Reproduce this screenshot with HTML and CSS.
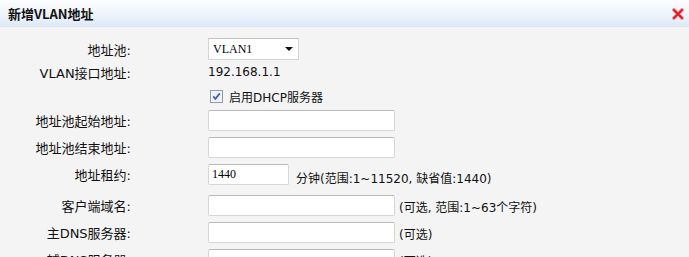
FILE: index.html
```html
<!DOCTYPE html>
<html lang="zh-CN">
<head>
<meta charset="utf-8">
<title>新增VLAN地址</title>
<link rel="stylesheet" href="styles.css">
</head>
<body>
<div class="dialog">
  <div class="titlebar">
    <span class="title">新增VLAN地址</span>
    <span class="close" title="关闭">
      <svg width="12" height="12" viewBox="0 0 12 12">
        <path d="M1.8 1.8 L10.2 10.2 M10.2 1.8 L1.8 10.2" stroke="#f2a7aa" stroke-width="3.8" stroke-linecap="round"/>
        <path d="M2 2 L10 10 M10 2 L2 10" stroke="#d9202b" stroke-width="2.2" stroke-linecap="round"/>
      </svg>
    </span>
  </div>
  <div class="form">
    <div class="row row-select">
      <span class="lbl">地址池:</span>
      <div class="select">
        <span class="select-val">VLAN1</span>
        <svg class="arrow" width="8" height="4" viewBox="0 0 8 4"><path d="M0 0 H8 L4 4 Z" fill="#111"/></svg>
      </div>
    </div>
    <div class="row row-text">
      <span class="lbl">VLAN接口地址:</span>
      <span class="val">192.168.1.1</span>
    </div>
    <div class="row row-text">
      <span class="lbl"></span>
      <span class="check">
        <svg width="13" height="13" viewBox="0 0 13 13">
          <rect x="0.5" y="0.5" width="12" height="12" fill="#fbfbfb" stroke="#8f9aa6"/>
          <rect x="1.5" y="1.5" width="10" height="10" fill="#eef1f5"/>
          <path d="M3.2 6.4 L5.4 8.8 L9.8 3.4" fill="none" stroke="#4864a8" stroke-width="1.8"/>
        </svg>
      </span>
      <span class="val">启用DHCP服务器</span>
    </div>
    <div class="row row-input">
      <span class="lbl">地址池起始地址:</span>
      <input class="inp" type="text" value="">
    </div>
    <div class="row row-input">
      <span class="lbl">地址池结束地址:</span>
      <input class="inp" type="text" value="">
    </div>
    <div class="row row-input row-lease">
      <span class="lbl">地址租约:</span>
      <input class="inp inp-short" type="text" value="1440">
      <span class="hint hint-lease">分钟(范围:1~11520, 缺省值:1440)</span>
    </div>
    <div class="row row-input">
      <span class="lbl">客户端域名:</span>
      <input class="inp" type="text" value="">
      <span class="hint">(可选, 范围:1~63个字符)</span>
    </div>
    <div class="row row-input">
      <span class="lbl">主DNS服务器:</span>
      <input class="inp" type="text" value="">
      <span class="hint">(可选)</span>
    </div>
    <div class="row row-input">
      <span class="lbl">辅DNS服务器:</span>
      <input class="inp" type="text" value="">
      <span class="hint">(可选)</span>
    </div>
  </div>
</div>
</body>
</html>
```

FILE: styles.css
```css
html, body {
  margin: 0;
  padding: 0;
  background: #f4f4f4;
  overflow: hidden;
}

body {
  font-family: "DejaVu Sans", "Noto Sans CJK SC", sans-serif;
  font-size: 12px;
  color: #111;
}

.dialog {
  width: 689px;
  height: 257px;
  background: #f4f4f4;
}

.titlebar {
  height: 26px;
  border-bottom: 1px solid #dbe6f2;
  background: linear-gradient(to bottom, #fcfdff 0%, #eef4fb 55%, #dfeaf7 100%);
  display: flex;
  align-items: center;
  justify-content: space-between;
  padding: 0 5px 0 8px;
}

.title {
  font-family: "Noto Sans CJK SC", sans-serif;
  font-weight: bold;
  font-size: 13px;
  color: #111;
}

.close {
  display: flex;
  width: 12px;
  height: 12px;
  margin-top: 1px;
}

.form {
  padding-top: 11px;
}

.row {
  display: flex;
  align-items: center;
}

.lbl {
  flex: 0 0 131px;
  width: 131px;
  margin-right: 77px;
  text-align: right;
  white-space: nowrap;
  font-size: 13px;
  color: #111;
}

.row-select {
  height: 22px;
}

.row-text {
  height: 24px;
}

.row-text + .row-input {
  margin-top: 2px;
}

.row-input {
  height: 21px;
  margin-bottom: 6px;
}

.row-lease {
  margin-bottom: 10px;
}

.select {
  box-sizing: border-box;
  width: 91px;
  height: 22px;
  background: #fff;
  border: 1px solid #d4d4d4;
  border-top-color: #c2c2c2;
  display: flex;
  align-items: center;
  justify-content: space-between;
  padding: 0 5px 0 4px;
}

.select-val {
  font-family: "Liberation Serif", serif;
  font-size: 12px;
  color: #000;
}

.arrow {
  display: block;
}

.val {
  white-space: nowrap;
}

.check {
  display: flex;
  width: 13px;
  height: 13px;
  margin: 0 6px 0 2px;
}

.inp {
  box-sizing: border-box;
  width: 187px;
  height: 21px;
  margin: 0;
  padding: 0 3px;
  background: #fff;
  border: 1px solid #d6d6d6;
  border-top-color: #b9b9b9;
  border-radius: 2px;
  outline: none;
  font-family: "Liberation Serif", serif;
  font-size: 12px;
  color: #000;
}

.inp-short {
  width: 81px;
}

.hint {
  margin-left: 4px;
  white-space: nowrap;
  position: relative;
  top: 1px;
}

.hint-lease {
  margin-left: 7px;
  top: 3px;
}
```
